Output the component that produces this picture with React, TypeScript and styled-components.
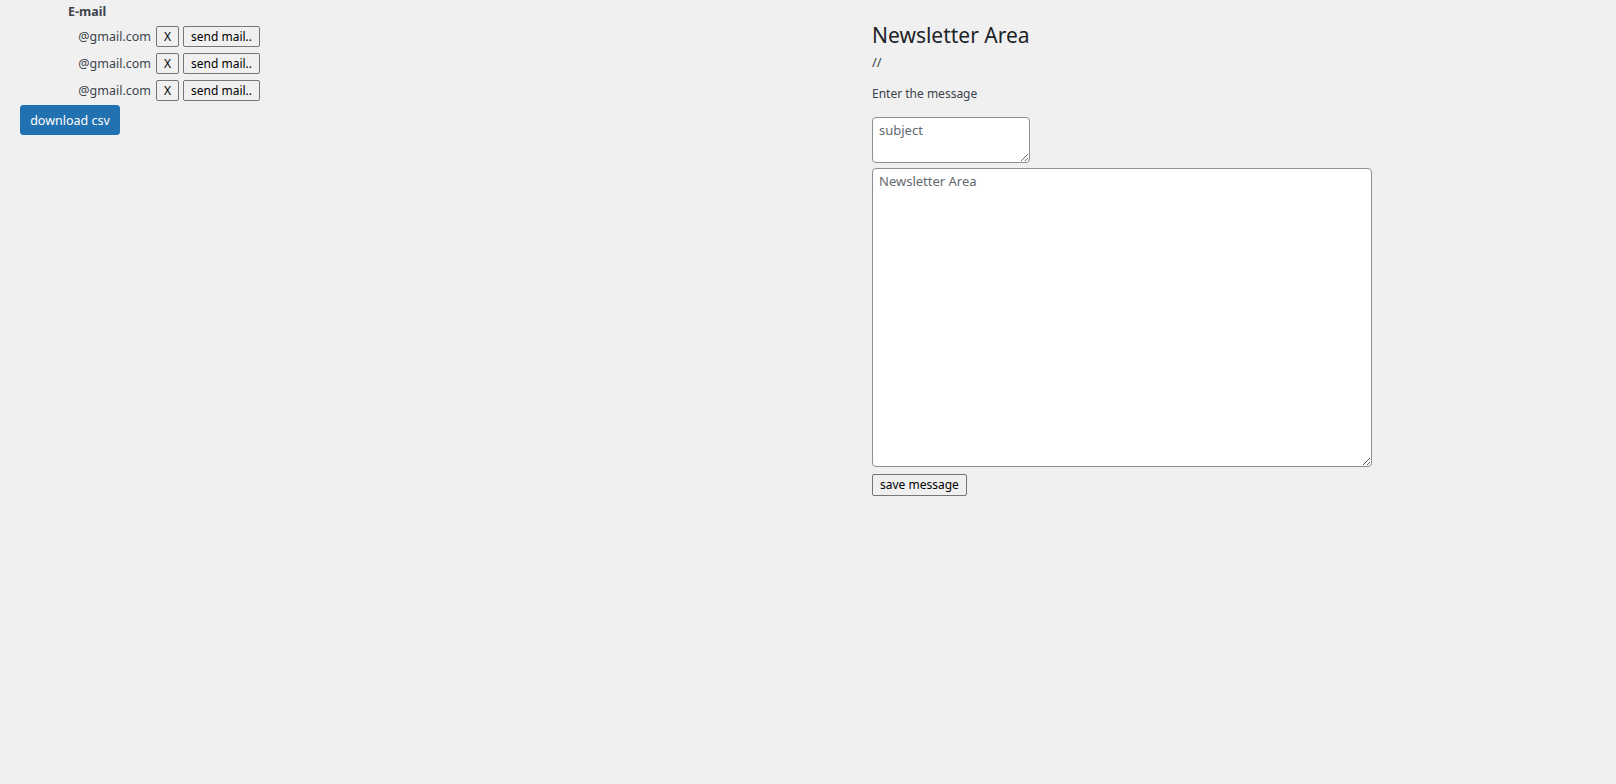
import React from "react";
import styled, { createGlobalStyle } from "styled-components";

const Global = createGlobalStyle`
  html, body { margin: 0; padding: 0; background: #f0f0f1; }
  body {
    font-family: "Noto Sans", "Open Sans", sans-serif;
    font-size: 12px;
    line-height: 18px;
    color: #3c434a;
    width: 1616px;
    height: 784px;
    overflow: hidden;
  }
`;

const Page = styled.div`
  display: grid;
  grid-template-columns: 852px 500px;
  padding-left: 20px;
`;

const LeftCol = styled.div`
  display: flex;
  flex-direction: column;
  align-items: flex-start;
`;

const EmailTable = styled.div`
  display: grid;
  grid-template-columns: 132px auto auto;
  column-gap: 4px;
  row-gap: 6px;
  align-items: center;
`;

const HeadCell = styled.div`
  grid-column: 1 / span 3;
  font-weight: 700;
  font-size: 12.5px;
  padding-left: 48px;
  height: 19px;
  line-height: 24px;
  margin-bottom: 1px;
`;

const EmailCell = styled.div`
  text-align: right;
  padding-right: 1px;
  font-size: 12.5px;
`;

const PlainButton = styled.button<{ $h?: number }>`
  font-family: "Noto Sans", "Open Sans", sans-serif;
  font-size: 12px;
  color: #000;
  background: #f0f0f0;
  border: 1px solid #767676;
  border-radius: 2px;
  height: ${(p) => p.$h ?? 21}px;
  padding: 0 7px;
  line-height: 1;
  white-space: nowrap;
  cursor: pointer;
`;

const PrimaryButton = styled.button`
  margin-top: 4px;
  font-family: "Noto Sans", "Open Sans", sans-serif;
  font-size: 12.5px;
  color: #fff;
  background: #2271b1;
  border: 1px solid #2271b1;
  border-radius: 3px;
  height: 30px;
  width: 100px;
  padding: 0;
  white-space: nowrap;
  cursor: pointer;
`;

const RightCol = styled.div`
  display: flex;
  flex-direction: column;
  align-items: flex-start;
  padding-top: 21px;
`;

const Title = styled.h1`
  margin: 0;
  font-size: 21px;
  font-weight: 400;
  line-height: 29px;
  color: #1d2327;
`;

const Slashes = styled.div`
  margin-top: 3px;
  font-size: 13px;
  line-height: 18px;
`;

const Label = styled.p`
  margin: 14px 0 0;
  line-height: 18px;
`;

const Area = styled.textarea<{ $w: number; $h: number }>`
  box-sizing: border-box;
  width: ${(p) => p.$w}px;
  height: ${(p) => p.$h}px;
  font-family: "Noto Sans", "Open Sans", sans-serif;
  font-size: 13px;
  line-height: 20px;
  padding: 2px 6px;
  border: 1px solid #8c8f94;
  border-radius: 4px;
  background: #fff;
  color: #2c3338;
  &::placeholder { color: #646970; }
`;

const SubjectArea = styled(Area)`
  margin-top: 14px;
`;

const BodyArea = styled(Area)`
  margin-top: 5px;
`;

const SaveButton = styled(PlainButton)`
  margin-top: 7px;
`;

const emails = ["@gmail.com", "@gmail.com", "@gmail.com"];

export default function App() {
  return (
    <>
      <Global />
      <Page>
        <LeftCol>
          <EmailTable>
            <HeadCell>E-mail</HeadCell>
            {emails.map((e, i) => (
              <React.Fragment key={i}>
                <EmailCell>{e}</EmailCell>
                <PlainButton>X</PlainButton>
                <PlainButton>send mail..</PlainButton>
              </React.Fragment>
            ))}
          </EmailTable>
          <PrimaryButton>download csv</PrimaryButton>
        </LeftCol>
        <RightCol>
          <Title>Newsletter Area</Title>
          <Slashes>//</Slashes>
          <Label>Enter the message</Label>
          <SubjectArea $w={158} $h={46} placeholder="subject" />
          <BodyArea $w={500} $h={299} placeholder="Newsletter Area" />
          <SaveButton $h={22}>save message</SaveButton>
        </RightCol>
      </Page>
    </>
  );
}
